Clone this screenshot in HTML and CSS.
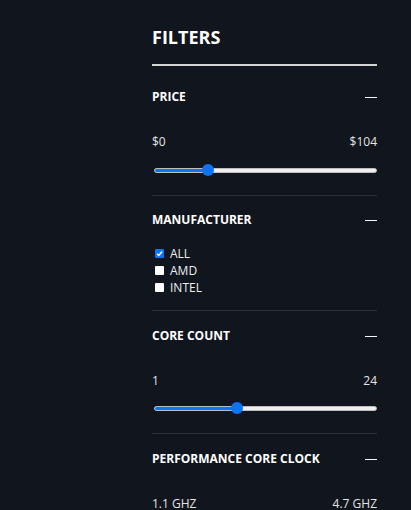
FILE: index.html
```html
<!DOCTYPE html>
<html lang="en">
<head>
<meta charset="utf-8">
<title>Filters</title>
<link rel="stylesheet" href="styles.css">
</head>
<body>
<aside class="filters">
  <h2 class="title">FILTERS</h2>

  <section class="group first">
    <div class="group-head"><span class="group-name">PRICE</span><span class="collapse"></span></div>
    <div class="range-values"><span>$0</span><span>$104</span></div>
    <div class="slider">
      <div class="track"><div class="fill" style="width:24.2%"></div></div>
      <span class="thumb" style="left:24.2%"></span>
    </div>
  </section>

  <section class="group checks-group">
    <div class="group-head"><span class="group-name">MANUFACTURER</span><span class="collapse"></span></div>
    <ul class="checks">
      <li><span class="box checked"><svg viewBox="0 0 9 9" width="9" height="9"><path d="M2 4.7 L3.8 6.5 L7.1 2.5" fill="none" stroke="#fff" stroke-width="1.4"/></svg></span>ALL</li>
      <li><span class="box"></span>AMD</li>
      <li><span class="box"></span>INTEL</li>
    </ul>
  </section>

  <section class="group">
    <div class="group-head"><span class="group-name">CORE COUNT</span><span class="collapse"></span></div>
    <div class="range-values"><span>1</span><span>24</span></div>
    <div class="slider">
      <div class="track"><div class="fill" style="width:37.2%"></div></div>
      <span class="thumb" style="left:37.2%"></span>
    </div>
  </section>

  <section class="group">
    <div class="group-head"><span class="group-name">PERFORMANCE CORE CLOCK</span><span class="collapse"></span></div>
    <div class="range-values"><span>1.1 GHZ</span><span>4.7 GHZ</span></div>
    <div class="slider">
      <div class="track"><div class="fill" style="width:30%"></div></div>
      <span class="thumb" style="left:30%"></span>
    </div>
  </section>
</aside>
</body>
</html>
```

FILE: styles.css
```css
html, body {
  margin: 0;
  padding: 0;
  background: #11151d;
}

body {
  font-family: "Open Sans", "Liberation Sans", sans-serif;
  color: #f2f2f2;
  font-size: 12px;
}

.filters {
  width: 225px;
  margin-left: 152px;
  padding-top: 25px;
}

.title {
  margin: 0;
  font-size: 18px;
  line-height: 25px;
  font-weight: 700;
  color: #ffffff;
  padding-bottom: 14px;
  border-bottom: 2px solid #d4d4d4;
}

.group {
  padding: 17px 0 19px;
  border-bottom: 1px solid #2a2f3a;
}

.group.first {
  padding-top: 23px;
}

.group.checks-group {
  padding-top: 16px;
  padding-bottom: 14px;
}

.group-head {
  display: flex;
  justify-content: space-between;
  align-items: center;
  height: 16px;
  line-height: 16px;
}

.group-name {
  font-weight: 700;
  font-size: 12px;
  color: #ffffff;
}

.collapse {
  display: block;
  width: 12px;
  height: 1px;
  background: #f4f4f4;
}

.range-values {
  display: flex;
  justify-content: space-between;
  margin-top: 29px;
  line-height: 16px;
  color: #e4e4e4;
}

.slider {
  position: relative;
  height: 12px;
  margin: 13px 0 0 2px;
  display: flex;
  align-items: center;
}

.first .slider {
  margin-top: 14px;
}

.track {
  flex: 1;
  height: 5px;
  box-sizing: border-box;
  background: #efefef;
  border: 1px solid #bdbdbd;
  border-radius: 3px;
  overflow: hidden;
  display: flex;
}

.fill {
  height: 100%;
  background: #0b75f5;
  margin: -1px 0 -1px -1px;
  padding-bottom: 2px;
}

.thumb {
  position: absolute;
  top: 0;
  width: 12px;
  height: 12px;
  margin-left: -6px;
  border-radius: 50%;
  background: #0b75f5;
}

.checks {
  list-style: none;
  margin: 17px 0 0;
  padding: 0;
}

.checks li {
  display: flex;
  align-items: center;
  line-height: 17px;
  height: 17px;
  color: #eeeeee;
}

.box {
  display: block;
  width: 9px;
  height: 9px;
  margin: 0 6px 0 3px;
  background: #ffffff;
  border-radius: 1px;
}

.box svg {
  display: block;
}

.box.checked {
  background: #0b75f5;
}
```
